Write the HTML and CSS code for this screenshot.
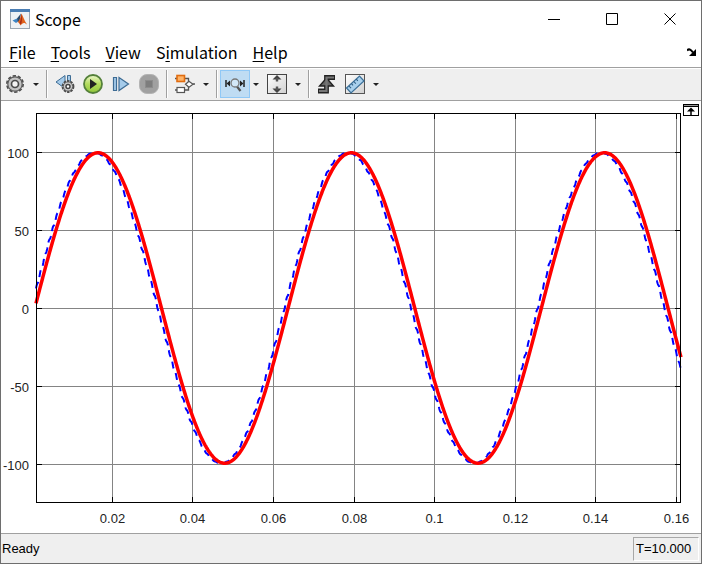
FILE: index.html
```
<!DOCTYPE html>
<html lang="en">
<head>
  <meta charset="UTF-8">
  <title>Scope</title>
  <meta name="viewport" content="width=device-width, initial-scale=1.0">
  <link rel="stylesheet" href="styles.css">
</head>
<body>
  <div class="window">
    <!-- Title bar -->
    <header class="titlebar">
      <svg class="app-icon" viewBox="0 0 20 20">
        <rect x="0.5" y="0.5" width="19" height="19" fill="#eef1f4" stroke="#9aa5b1"/>
        <rect x="0" y="0" width="20" height="3" fill="#4a7db3"/>
        <path d="M2.500 11.500L7 9.500 9 12 6 14z" fill="#3d84c4"/>
        <path d="M7 9.500L11 4.500 9.500 12.500 8 13z" fill="#2a4a6e"/>
        <path d="M11.500 4.500C13 7 14 11 17 15.500 14.500 13 12.500 13.500 10.500 16.500 9.500 14.500 9 13.500 7.500 13 9.500 12 10.500 8 11.500 4.500z" fill="#e0621c"/>
        <path d="M11.500 5C12 9 12.500 11 11 15.500L9.500 14C11 11 11 8 11.500 5z" fill="#a82a14"/>
      </svg>
      <h1 class="title">Scope</h1>
      <div class="controls">
        <button type="button" class="control-btn" title="Minimize"><svg viewBox="0 0 12 12"><path d="M0 6.500h12"/></svg></button>
        <button type="button" class="control-btn" title="Maximize"><svg viewBox="0 0 12 12"><path d="M.5.5h11v11h-11z"/></svg></button>
        <button type="button" class="control-btn" title="Close"><svg viewBox="0 0 12 12"><path d="M.5.5l11 11M11.500.5l-11 11"/></svg></button>
      </div>
    </header>

    <!-- Menus -->
    <nav class="menubar">
      <a href="#"><u>F</u>ile</a>
      <a href="#"><u>T</u>ools</a>
      <a href="#"><u>V</u>iew</a>
      <a href="#">S<u>i</u>mulation</a>
      <a href="#"><u>H</u>elp</a>
      <button type="button" class="dock-btn" title="Dock">
        <svg viewBox="0 0 9 8"><path d="M0 2.500Q2.500-.5 6 4.500" fill="none" stroke="#000" stroke-width="2"/><path d="M9 1v7H2z" fill="#000"/></svg>
      </button>
    </nav>

    <!-- Toolbar -->
    <div class="toolbar">
      <button type="button" class="tool" title="Configuration Properties">
        <svg viewBox="0 0 20 20">
          <circle cx="10" cy="10" r="8" fill="none" stroke="#4c4c4c" stroke-width="2" stroke-dasharray="3.200 1.827"/>
          <circle cx="10" cy="10" r="5.500" fill="none" stroke="#c4c4c4" stroke-width="4"/>
          <circle cx="10" cy="10" r="7.200" fill="none" stroke="#5c5c5c" stroke-width="1.200"/>
          <circle cx="10" cy="10" r="3.500" fill="#f4f4f4" stroke="#4c4c4c" stroke-width="1.700"/>
        </svg>
      </button>
      <button type="button" class="caret" title="More"></button>
      <span class="sep"></span>
      <button type="button" class="tool" title="Stepping Options">
        <svg viewBox="0 0 20 20">
          <path d="M10 1.500v13L1 8z" fill="#a5cbea" stroke="#3e6c94"/>
          <path d="M12.500 1.500h3v10h-3z" fill="#a5cbea" stroke="#3e6c94"/>
          <circle cx="13" cy="12.500" r="5.500" fill="#ddd" stroke="#4c4c4c" stroke-width="1.800" stroke-dasharray="2.500 .956"/>
          <circle cx="13" cy="12.500" r="4.600" fill="#cfcfcf" stroke="#5c5c5c"/>
          <circle cx="13" cy="12.500" r="2" fill="#fff" stroke="#444" stroke-width="1.500"/>
        </svg>
      </button>
      <button type="button" class="tool" title="Run">
        <svg viewBox="0 0 20 20">
          <defs>
            <linearGradient id="run" x1="0" y1="0" x2="0" y2="1"><stop offset="0" stop-color="#eef9cf"/><stop offset=".5" stop-color="#b4dc5e"/><stop offset="1" stop-color="#8fc63a"/></linearGradient>
          </defs>
          <circle cx="10" cy="10" r="9" fill="url(#run)" stroke="#54803a" stroke-width="1.800"/>
          <path d="M7 5l7 5-7 5z" fill="#222"/>
        </svg>
      </button>
      <button type="button" class="tool" title="Step Forward">
        <svg viewBox="0 0 20 20">
          <path d="M2.500 3.500h3v13h-3zM8 3.500L17.500 10 8 16.500z" fill="#a5cbea" stroke="#3e6c94" stroke-width="1.200"/>
        </svg>
      </button>
      <button type="button" class="tool" title="Stop">
        <svg viewBox="0 0 20 20">
          <rect x=".5" y=".5" width="19" height="19" rx="7.500" fill="#a0a0a0" stroke="#b4b4b4"/>
          <rect x="6.500" y="6.500" width="7" height="7" fill="#7d7d7d" stroke="#8c8c8c"/>
        </svg>
      </button>
      <span class="sep"></span>
      <button type="button" class="tool" title="Highlight Block">
        <svg viewBox="0 0 20 20">
          <path d="M9 4.500h4.500v4M9 16h4.500v-4M17.500 10H20M0 4.500h2M0 16h2" fill="none" stroke="#555" stroke-width="1.300"/>
          <rect x="2" y="1.500" width="7.500" height="6" fill="#ffb366" stroke="#e06c10" stroke-width="1.600"/>
          <rect x="2" y="13.500" width="7.500" height="5" fill="#fff" stroke="#555" stroke-width="1.200"/>
          <path d="M10.500 10.300l3.500-3 4 3-4 3z" fill="#fff" stroke="#555" stroke-width="1.200"/>
        </svg>
      </button>
      <button type="button" class="caret" title="More"></button>
      <span class="sep"></span>
      <button type="button" class="tool active" title="Zoom X">
        <svg viewBox="0 0 20 20">
          <path d="M1 6v7M19 6v7" stroke="#222" stroke-width="1.500"/>
          <path d="M5 6.500v6L1.500 9.500zM15 6.500v6l3.500-3z" fill="#222"/>
          <path d="M12 12.500l3.500 4.500" stroke="#555" stroke-width="2.200"/>
          <circle cx="10" cy="9" r="4" fill="#d3e8f8" stroke="#777" stroke-width="1.300"/>
        </svg>
      </button>
      <button type="button" class="caret" title="More"></button>
      <button type="button" class="tool" title="Scale Y-Axis Limits">
        <svg viewBox="0 0 20 20">
          <defs>
            <linearGradient id="sheet" x1="0" y1="0" x2="1" y2="1"><stop offset="0" stop-color="#fff"/><stop offset="1" stop-color="#d0d0d0"/></linearGradient>
          </defs>
          <rect x=".5" y=".5" width="19" height="19" fill="url(#sheet)" stroke="#444"/>
          <path d="M10 1l4.500 4.500h-9zM10 19l-4.500-4.500h9z" fill="#444"/>
          <path d="M10 4v3.500M10 12.500v3.500" stroke="#555" stroke-width="2.400"/>
        </svg>
      </button>
      <button type="button" class="caret" title="More"></button>
      <span class="sep"></span>
      <button type="button" class="tool" title="Triggers">
        <svg viewBox="0 0 20 20">
          <path d="M1 17h8.500V3.500H18" fill="none" stroke="#222" stroke-width="4.800"/>
          <path d="M9.500 4l7 8h-14z" fill="#666" stroke="#222" stroke-width="1.400"/>
          <path d="M2 17h7.500V3.500H17" fill="none" stroke="#777" stroke-width="2.200"/>
        </svg>
      </button>
      <button type="button" class="tool" title="Cursor Measurements">
        <svg viewBox="0 0 20 20">
          <rect x=".5" y=".5" width="19" height="19" fill="url(#sheet)" stroke="#555"/>
          <path d="M1.500 14L14.500 2l4.500 5L6 19z" fill="#a9d0ec" stroke="#3b6f98" stroke-width="1.200"/>
          <path d="M4 12l2 2.200M6.500 9.700l1.500 1.700M8.800 7.500l2 2.200M11.300 5.200l1.500 1.700" stroke="#2e5d84" stroke-width="1.100"/>
        </svg>
      </button>
      <button type="button" class="caret" title="More"></button>
    </div>

    <!-- Plot -->
    <main class="display">
      <svg class="plot" id="plot"></svg>
      <button type="button" class="maximize-axes" title="Maximize Axes">
        <svg viewBox="0 0 16 12">
          <rect x=".5" y=".5" width="15" height="11" fill="#fff" stroke="#000"/>
          <path d="M1 1.500h14" stroke="#999"/>
          <path d="M1 2.500h14" stroke="#000"/>
          <path d="M8 3.500l4 4H4z" fill="#000"/>
          <path d="M8 6v5" stroke="#000" stroke-width="1.500"/>
        </svg>
      </button>
    </main>

    <!-- Status bar -->
    <footer class="statusbar">
      <span>Ready</span>
      <span class="time">T=10.000</span>
    </footer>
  </div>
  <script src="scope.js"></script>
</body>
</html>
```
FILE: styles.css
```
* {
  box-sizing: border-box;
}
html, body {
  height: 100%;
  margin: 0;
}
body {
  font-family: "Liberation Sans", Arial, sans-serif;
  font-size: 13px;
  color: #000;
}
button {
  padding: 0;
  border: none;
  background: none;
}
svg {
  display: block;
}
.window {
  height: 100%;
  display: flex;
  flex-direction: column;
  background: #fff;
  border: 1px solid #6e6e6e;
}
/* Title bar */
.titlebar {
  height: 36px;
  display: flex;
  align-items: center;
  gap: 5px;
  padding: 0 2px 0 9px;
}
.app-icon {
  width: 20px;
  height: 20px;
}
.title {
  margin: 0;
  font: 400 16px/22px "Noto Sans CJK SC", "Noto Sans", sans-serif;
}
.controls {
  display: flex;
  align-self: stretch;
  margin-left: auto;
}
.control-btn {
  width: 58px;
  display: flex;
  align-items: center;
  justify-content: center;
}
.control-btn svg {
  width: 12px;
  height: 12px;
  fill: none;
  stroke: #000;
}
/* Menus */
.menubar {
  height: 30px;
  display: flex;
  align-items: center;
  gap: 15px;
  padding: 0 5px 0 8px;
  font: 16px/22px "Noto Sans CJK SC", "Noto Sans", sans-serif;
}
.menubar a {
  color: #000;
  text-decoration: none;
}
.menubar u {
  text-underline-offset: 2px;
}
.dock-btn {
  margin-left: auto;
}
.dock-btn svg {
  width: 9px;
  height: 8px;
}
/* Toolbar */
.toolbar {
  height: 34px;
  display: flex;
  align-items: center;
  background: #efefef;
  border-top: 1px solid #a0a0a0;
  border-bottom: 1px solid #a0a0a0;
  box-shadow: inset 0 1px #fff;
}
.tool {
  width: 28px;
  height: 26px;
  display: flex;
  align-items: center;
  justify-content: center;
}
.tool svg {
  width: 20px;
  height: 20px;
}
.tool.active {
  background: #bfdcf3;
  box-shadow: 0 0 0 1px #90c8f6;
}
.caret {
  width: 14px;
  height: 26px;
  display: flex;
  align-items: center;
  justify-content: center;
}
.caret::before {
  content: "";
  border: 3px solid transparent;
  border-top-color: #222;
  border-bottom: none;
}
.sep {
  width: 2px;
  height: 28px;
  margin: 0 3px;
  border-left: 1px solid #a0a0a0;
  background: #fff;
}
/* Plot */
.display {
  flex: 1;
  min-height: 0;
  position: relative;
}
.plot {
  width: 100%;
  height: 100%;
}
.plot text {
  fill: #222;
}
.grid {
  stroke: #848484;
}
.frame, .tick {
  fill: none;
  stroke: #000;
}
.signal {
  fill: none;
  stroke: #f00;
  stroke-width: 3.5;
}
.reference {
  fill: none;
  stroke: #00f;
  stroke-width: 2;
  stroke-dasharray: 7 5;
}
.maximize-axes {
  position: absolute;
  top: 3px;
  right: 2px;
}
.maximize-axes svg {
  width: 16px;
  height: 12px;
}
/* Status bar */
.statusbar {
  height: 30px;
  display: flex;
  align-items: center;
  justify-content: space-between;
  padding: 0 2px 0 1px;
  background: #efefef;
  border-top: 1px solid #a0a0a0;
}
.time {
  width: 66px;
  padding: 2px;
  line-height: 18px;
  border: 1px solid;
  border-color: #a8a8a8 #fff #fff #a8a8a8;
}
```
FILE: scope.js
```
const plot = document.getElementById('plot');
const margin = { left: 35, right: 20, top: 12, bottom: 30 };
const tMin = 0.0011;
const tMax = 0.1611;
const yMax = 125;

function draw() {
  const w = Math.round(plot.clientWidth);
  const h = Math.round(plot.clientHeight);
  const left = margin.left;
  const right = w - margin.right;
  const top = margin.top;
  const bottom = h - margin.bottom;
  const px = t => left + (t - tMin) / (tMax - tMin) * (right - left);
  const py = v => top + (yMax - v) / (2 * yMax) * (bottom - top);
  const snap = n => Math.floor(n) + 0.5;

  let grid = '';
  let ticks = '';
  let labels = '';
  for (let i = 1; i <= 8; i++) {
    const x = snap(px(i * 0.02));
    grid += `M${x} ${top}V${bottom}`;
    ticks += `M${x} ${top}v6M${x} ${bottom}v-6`;
    labels += `<text x="${x}" y="${bottom + 20}" text-anchor="middle">${+(i * 0.02).toFixed(2)}</text>`;
  }
  for (let v = -100; v <= 100; v += 50) {
    const y = snap(py(v));
    grid += `M${left} ${y}H${right}`;
    ticks += `M${left} ${y}h6M${right} ${y}h-6`;
    labels += `<text x="${left - 7}" y="${y + 5}" text-anchor="end">${v}</text>`;
  }

  // the signal follows the sampled reference with a small lag
  const signal = [];
  const reference = [];
  const sample = 0.001;
  for (let t = tMin; t <= tMax; t += 0.0001) {
    const ripple = 0.1 * sample * Math.sin(2 * Math.PI * t / sample);
    signal.push(px(t).toFixed(2) + ' ' + py(99.5 * Math.sin(100 * (t - 0.0008))).toFixed(2));
    reference.push(px(t).toFixed(2) + ' ' + py(99.5 * Math.sin(100 * (t + 0.0001 + ripple))).toFixed(2));
  }

  plot.innerHTML =
    `<path class="grid" d="${grid}"/>` +
    `<path class="reference" d="M${reference.join('L')}"/>` +
    `<path class="signal" d="M${signal.join('L')}"/>` +
    `<path class="tick" d="${ticks}"/>` +
    `<rect class="frame" x="${left + 0.5}" y="${top + 0.5}" width="${right - left - 1}" height="${bottom - top - 1}"/>` +
    labels;
}

draw();
window.addEventListener('resize', draw);
```
